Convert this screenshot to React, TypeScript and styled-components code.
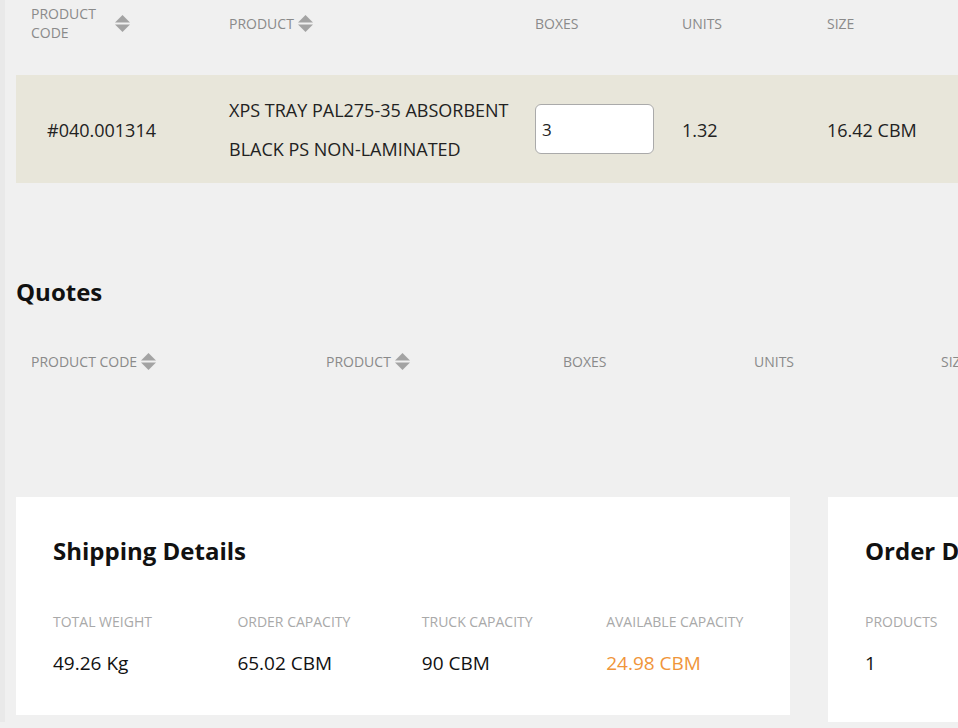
import styled, { createGlobalStyle } from "styled-components";

const GlobalStyle = createGlobalStyle`
  body {
    margin: 0;
    background: #f0f0f0;
    font-family: "Open Sans", "Noto Sans", Arial, sans-serif;
    color: #1a1a1a;
    overflow: hidden;
    box-shadow: inset 5px 0 0 #e9e9e9;
  }
`;

interface Product {
  code: string;
  name: string[];
  boxes: number;
  units: string;
  size: string;
}

const products: Product[] = [
  {
    code: "#040.001314",
    name: ["XPS TRAY PAL275-35 ABSORBENT", "BLACK PS NON-LAMINATED"],
    boxes: 3,
    units: "1.32",
    size: "16.42 CBM",
  },
];

const shipping = [
  { label: "TOTAL WEIGHT", value: "49.26 Kg" },
  { label: "ORDER CAPACITY", value: "65.02 CBM" },
  { label: "TRUCK CAPACITY", value: "90 CBM" },
  { label: "AVAILABLE CAPACITY", value: "24.98 CBM", warn: true },
];

function SortIcon() {
  return (
    <svg width="15" height="17" viewBox="0 0 15 17">
      <path d="M7.5 0 L15 7.5 L0 7.5 Z" fill="#a3a3a3" />
      <path d="M0 9.5 L15 9.5 L7.5 17 Z" fill="#a3a3a3" />
    </svg>
  );
}

function App() {
  return (
    <>
      <GlobalStyle />
      <Page>
        {/* products table */}
        <Table $cols="198px 306px 147px 145px 1fr">
          <HeadCell>
            <HeadLabel $width="80px">PRODUCT CODE</HeadLabel>
            <SortIcon />
          </HeadCell>
          <HeadCell>
            <HeadLabel>PRODUCT</HeadLabel>
            <SortIcon />
          </HeadCell>
          <HeadCell>BOXES</HeadCell>
          <HeadCell>UNITS</HeadCell>
          <HeadCell>SIZE</HeadCell>
        </Table>
        {products.map((p) => (
          <Row key={p.code} $cols="198px 306px 147px 145px 1fr">
            <Cell $indent>{p.code}</Cell>
            <Cell>
              <NameText>
                {p.name.map((line) => (
                  <div key={line}>{line}</div>
                ))}
              </NameText>
            </Cell>
            <Cell>
              <BoxInput defaultValue={p.boxes} />
            </Cell>
            <Cell>{p.units}</Cell>
            <Cell>{p.size}</Cell>
          </Row>
        ))}

        <SectionTitle>Quotes</SectionTitle>
        <Table $cols="295px 237px 191px 187px 1fr">
          <HeadCell>
            <HeadLabel>PRODUCT CODE</HeadLabel>
            <SortIcon />
          </HeadCell>
          <HeadCell>
            <HeadLabel>PRODUCT</HeadLabel>
            <SortIcon />
          </HeadCell>
          <HeadCell>BOXES</HeadCell>
          <HeadCell>UNITS</HeadCell>
          <HeadCell>SIZE</HeadCell>
        </Table>

        <Cards>
          <Card $width="774px" $height="218px">
            <CardTitle>Shipping Details</CardTitle>
            <Stats $cols="184.4px 184.4px 184.4px 1fr">
              {shipping.map((s) => (
                <Stat key={s.label}>
                  <StatLabel>{s.label}</StatLabel>
                  <StatValue $warn={s.warn}>{s.value}</StatValue>
                </Stat>
              ))}
            </Stats>
          </Card>
          <Card $width="360px" $height="225px">
            <CardTitle>Order Details</CardTitle>
            <Stats $cols="1fr">
              <Stat>
                <StatLabel>PRODUCTS</StatLabel>
                <StatValue>1</StatValue>
              </Stat>
            </Stats>
          </Card>
        </Cards>
      </Page>
    </>
  );
}

export default App;

const Page = styled.div`
  width: 1200px;
  padding-left: 16px;
`;

const Table = styled.div<{ $cols: string }>`
  display: grid;
  grid-template-columns: ${(p) => p.$cols};
  height: 75px;
  align-items: start;
  padding-top: 4px;
  box-sizing: border-box;
`;

const HeadCell = styled.div`
  display: flex;
  align-items: center;
  gap: 4px;
  min-height: 38px;
  padding-left: 15px;
  font-size: 14px;
  line-height: 19px;
  color: #8a8a8a;
  text-transform: uppercase;
`;

const HeadLabel = styled.span<{ $width?: string }>`
  width: ${(p) => p.$width || "auto"};
`;

const Row = styled.div<{ $cols: string }>`
  display: grid;
  grid-template-columns: ${(p) => p.$cols};
  align-items: center;
  height: 108px;
  padding-top: 2px;
  box-sizing: border-box;
  background: #e8e6da;
  font-size: 18px;
  color: #222;
`;

const Cell = styled.div<{ $indent?: boolean }>`
  padding-left: ${(p) => (p.$indent ? "31px" : "15px")};
`;

const NameText = styled.div`
  line-height: 39px;
`;

const BoxInput = styled.input`
  box-sizing: border-box;
  width: 119px;
  height: 50px;
  margin-top: -2px;
  padding: 0 6px;
  border: 1px solid #aaa;
  border-radius: 6px;
  background: #fff;
  font: inherit;
  font-size: 17px;
  color: #222;
  outline: none;
`;

const SectionTitle = styled.h2`
  margin: 96px 0 0;
  height: 59px;
  font-size: 24px;
  font-weight: 700;
  color: #111;
  line-height: 26px;
`;

const Cards = styled.div`
  display: flex;
  align-items: flex-start;
  gap: 38px;
  margin-top: 84px;
`;

const Card = styled.div<{ $width: string; $height: string }>`
  box-sizing: border-box;
  width: ${(p) => p.$width};
  height: ${(p) => p.$height};
  flex-shrink: 0;
  background: #fff;
  padding: 39px 37px;
`;

const CardTitle = styled.h3`
  margin: 0;
  font-size: 24px;
  font-weight: 700;
  color: #111;
  line-height: 30px;
`;

const Stats = styled.div<{ $cols: string }>`
  display: grid;
  grid-template-columns: ${(p) => p.$cols};
  margin-top: 46px;
`;

const Stat = styled.div`
  display: flex;
  flex-direction: column;
  gap: 19px;
`;

const StatLabel = styled.div`
  font-size: 14px;
  line-height: 20px;
  color: #a9a9a9;
`;

const StatValue = styled.div<{ $warn?: boolean }>`
  font-size: 19px;
  line-height: 24px;
  color: ${(p) => (p.$warn ? "#f0953a" : "#111")};
`;
